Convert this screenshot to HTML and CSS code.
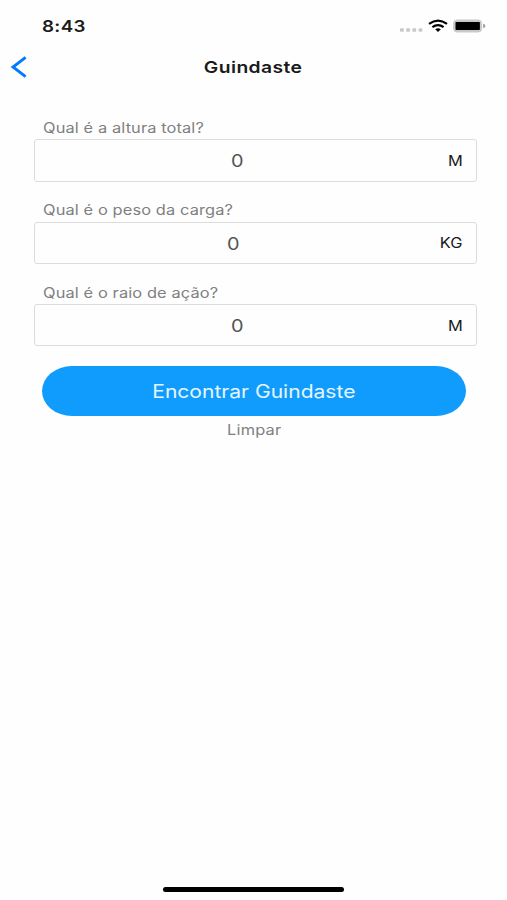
FILE: index.html
```html
<!DOCTYPE html>
<html lang="pt-BR">
<head>
  <meta charset="UTF-8">
  <meta name="viewport" content="width=device-width, initial-scale=1.0">
  <title>Guindaste</title>
  <link rel="stylesheet" href="styles.css">
</head>
<body>

  <!-- Status bar -->
  <div class="status-bar">
    <span class="time wide">8:43</span>
    <div class="status-icons">
      <svg width="87" height="16" viewBox="0 0 87 16">
        <g fill="#c9c9c9">
          <rect x="1" y="9.2" width="3.8" height="3.6" rx=".8"/>
          <rect x="7.2" y="9.2" width="3.8" height="3.6" rx=".8"/>
          <rect x="13.4" y="9.2" width="3.8" height="3.6" rx=".8"/>
          <rect x="19.6" y="9.2" width="3.8" height="3.6" rx=".8"/>
        </g>
        <g fill="none" stroke="#000" stroke-width="2.2">
          <path d="M30 4.9Q39 -1.7 48 4.9"/>
          <path d="M33.4 8.2Q39 3.9 44.6 8.2"/>
        </g>
        <path d="M36.2 10.2Q39 8.2 41.8 10.2L39 13Z"/>
        <rect x="54.6" y="1" width="28" height="12" rx="3.4" fill="#c9c9c9" stroke="#c9c9c9"/>
        <rect x="56.5" y="3" width="24.4" height="8" rx=".8"/>
        <path d="M84.2 4.8Q86.4 5.4 86.4 7T84.2 9.2Z" fill="#999"/>
      </svg>
    </div>
  </div>

  <!-- Navigation header -->
  <header class="header">
    <svg class="back" width="18" height="24" viewBox="0 0 18 24">
      <path d="M15.6 2.3L3 12L15.6 21.7" fill="none" stroke="#007aff" stroke-width="2.9"/>
    </svg>
    <h1 class="title"><span class="wide">Guindaste</span></h1>
  </header>

  <main class="form">
    <div class="field">
      <label class="label wide" for="altura">Qual é a altura total?</label>
      <div class="input" id="altura">
        <span class="value"><span class="wide">0</span></span>
        <span class="unit wide">M</span>
      </div>
    </div>
    <div class="field">
      <label class="label wide" for="peso">Qual é o peso da carga?</label>
      <div class="input" id="peso">
        <span class="value"><span class="wide">0</span></span>
        <span class="unit unit-kg wide">KG</span>
      </div>
    </div>
    <div class="field">
      <label class="label wide" for="raio">Qual é o raio de ação?</label>
      <div class="input" id="raio">
        <span class="value"><span class="wide">0</span></span>
        <span class="unit wide">M</span>
      </div>
    </div>

    <button class="submit" type="button"><span class="wide">Encontrar Guindaste</span></button>
    <button class="clear" type="button"><span class="wide">Limpar</span></button>
  </main>

  <div class="home-bar"></div>

</body>
</html>
```

FILE: styles.css
```css
* {
  box-sizing: border-box;
}

body {
  display: flex;
  flex-direction: column;
  height: 900px;
  margin: 0;
  background-color: #fefefe;
  color: #1a1a1a;
  font-family: Inter, sans-serif;
}

/* Extended letterforms */
.wide {
  display: inline-block;
  transform: scaleX(1.17);
}

/* Status bar */
.status-bar {
  display: flex;
  justify-content: space-between;
  height: 42px;
  padding: 16px 21px 0 42px;
}

.time {
  font-size: 16px;
  font-weight: 600;
  line-height: 20px;
  letter-spacing: 0.3px;
  transform-origin: left;
}

.status-icons {
  padding-top: 3px;
}

.status-icons svg {
  display: block;
}

/* Header */
.header {
  display: grid;
  grid-template-columns: 40px 1fr 40px;
  align-items: center;
  height: 50px;
}

.back {
  margin-left: 10px;
}

.title {
  margin: 0;
  font-size: 16.5px;
  font-weight: 600;
  letter-spacing: 0.35px;
  text-align: center;
}

/* Form */
.form {
  display: flex;
  flex: 1;
  flex-direction: column;
  padding: 26px 30px 0 34px;
}

.field {
  height: 82.4px;
}

.label {
  display: block;
  width: max-content;
  height: 21.2px;
  margin-left: 8.5px;
  color: #808080;
  font-size: 14px;
  line-height: 20px;
  letter-spacing: 0.1px;
  transform-origin: left;
}

.input {
  display: flex;
  align-items: center;
  height: 42.5px;
  padding-right: 14px;
  border: 1px solid #dcdcdc;
  border-radius: 3px;
}

.value {
  flex: 1;
  padding-top: 2px;
  color: #555;
  font-size: 17px;
  text-align: center;
}

.unit {
  width: 12px;
  margin-left: 11px;
  font-size: 14px;
  transform-origin: right;
}

.unit-kg {
  width: 19px;
}

.submit,
.clear {
  padding: 0;
  border: 0;
  font-family: inherit;
}

.submit {
  height: 50px;
  margin: 0.8px 11px 0 8px;
  padding-top: 1px;
  border-radius: 30px / 25px;
  background-color: #109cfd;
  color: #e6f6ff;
  font-size: 18px;
}

.clear {
  height: 28px;
  margin-right: 11px;
  margin-left: 8px;
  background: none;
  color: #808080;
  font-size: 14px;
  letter-spacing: 0.15px;
}

/* Home indicator */
.home-bar {
  align-self: center;
  width: 181px;
  height: 5px;
  margin-bottom: 8px;
  border-radius: 3px;
  background-color: #000;
}
```
